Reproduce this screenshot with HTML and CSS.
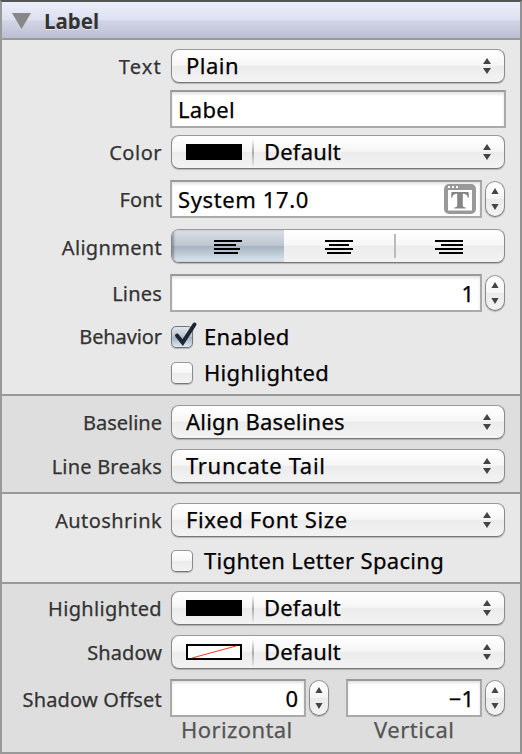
FILE: index.html
```
<!DOCTYPE html>
<html lang="en">
<head>
<meta charset="utf-8">
<title>Label</title>
<link rel="stylesheet" href="styles.css">
</head>
<body>
<svg class="defs" width="0" height="0">
  <symbol id="arrows" viewBox="0 0 8 16"><path d="M4 0 8 6H0zM0 10h8L4 16z"/></symbol>
  <symbol id="steps" viewBox="0 0 8 22"><path d="M4 0 7.6 6H.4zM.4 16h7.2L4 22z"/></symbol>
</svg>
<main class="inspector">
  <header class="header">
    <svg class="disclosure" width="19" height="16" viewBox="0 0 19 16"><path d="M0 0h19L9.500 16z"/></svg>
    <h1>Label</h1>
  </header>

  <section class="group first">
    <div class="row popup-row">
      <span class="label t14">Text</span>
      <div class="popup"><span class="t5">Plain</span><svg class="arrows"><use href="#arrows"/></svg></div>
    </div>
    <div class="row field-row">
      <span class="label"></span>
      <div class="field t3">Label</div>
    </div>
    <div class="row popup-row">
      <span class="label t5">Color</span>
      <div class="popup"><i class="swatch"></i><i class="rule"></i><span class="t2">Default</span><svg class="arrows"><use href="#arrows"/></svg></div>
    </div>
    <div class="row field-row font-row">
      <span class="label t1">Font</span>
      <div class="field t6"><span>System 17.0</span>
        <svg class="font-icon" width="32" height="30" viewBox="0 0 32 30">
          <rect width="32" height="30" rx="5" fill="#999"/>
          <path d="M4 6h24v20.500H4z" fill="#fff"/>
          <path d="M4 2h2v2H4zM8 2h2v2H8zM12 2h2v2h-2z" fill="#fff"/>
          <path d="M7.500 8h17l.5 5.500h-1.200c-.6-2.600-1.700-3.700-5-3.700v11.400c0 1.600.7 2 2.700 2.100V24.500h-11v-1.200c2-.1 2.700-.5 2.700-2.100V9.800c-3.300 0-4.400 1.100-5 3.700H7z" fill="#858585"/>
        </svg>
      </div>
      <div class="stepper"><svg><use href="#steps"/></svg></div>
    </div>
    <div class="row popup-row segment-row">
      <span class="label t3">Alignment</span>
      <div class="segments">
        <div class="segment selected"><svg width="28" height="14"><path d="M0 0h28v2H0zM0 4h22v2H0zM0 8h26v2H0zM0 12h24v2H0z"/></svg></div>
        <div class="segment"><svg width="28" height="14"><path d="M0 0h28v2H0zM4 4h20v2H4zM0 8h28v2H0zM2 12h24v2H2z"/></svg></div>
        <div class="segment"><svg width="28" height="14"><path d="M0 0h28v2H0zM6 4h22v2H6zM0 8h28v2H0zM4 12h24v2H4z"/></svg></div>
      </div>
    </div>
    <div class="row field-row lines-row">
      <span class="label t2">Lines</span>
      <div class="field number">1</div>
      <div class="stepper"><svg><use href="#steps"/></svg></div>
    </div>
    <div class="row check-row enabled-row">
      <span class="label tn2">Behavior</span>
      <div class="check on"><svg class="tick" width="24" height="24" viewBox="0 0 24 24"><path d="M4 13.500 9.700 20.500 21.500 2.500"/></svg></div>
      <span class="check-text t3">Enabled</span>
    </div>
    <div class="row check-row">
      <span class="label"></span>
      <div class="check"></div>
      <span class="check-text t3">Highlighted</span>
    </div>
  </section>

  <section class="group alt second">
    <div class="row popup-row">
      <span class="label">Baseline</span>
      <div class="popup"><span class="t2">Align Baselines</span><svg class="arrows"><use href="#arrows"/></svg></div>
    </div>
    <div class="row popup-row">
      <span class="label t2">Line Breaks</span>
      <div class="popup"><span class="t7">Truncate Tail</span><svg class="arrows"><use href="#arrows"/></svg></div>
    </div>
  </section>

  <section class="group third">
    <div class="row popup-row">
      <span class="label t4">Autoshrink</span>
      <div class="popup"><span class="t6">Fixed Font Size</span><svg class="arrows"><use href="#arrows"/></svg></div>
    </div>
    <div class="row check-row">
      <span class="label"></span>
      <div class="check"></div>
      <span class="check-text t3">Tighten Letter Spacing</span>
    </div>
  </section>

  <section class="group alt fourth">
    <div class="row popup-row">
      <span class="label t3">Highlighted</span>
      <div class="popup"><i class="swatch"></i><i class="rule"></i><span class="t2">Default</span><svg class="arrows"><use href="#arrows"/></svg></div>
    </div>
    <div class="row popup-row">
      <span class="label t1">Shadow</span>
      <div class="popup"><svg class="swatch none" width="56" height="16"><path d="M1 1h54v14H1z" fill="#fff" stroke="#000" stroke-width="2"/><path d="M6 14 50 2" stroke="#f2452f" stroke-width="1.200"/></svg><i class="rule"></i><span class="t2">Default</span><svg class="arrows"><use href="#arrows"/></svg></div>
    </div>
    <div class="row offset-row">
      <span class="label t2">Shadow Offset</span>
      <div class="field number">0</div>
      <div class="stepper"><svg><use href="#steps"/></svg></div>
      <div class="field number">−1</div>
      <div class="stepper"><svg><use href="#steps"/></svg></div>
      <span class="caption horizontal t4">Horizontal</span>
      <span class="caption vertical t5">Vertical</span>
    </div>
  </section>
</main>
</body>
</html>
```
FILE: styles.css
```
* { box-sizing: border-box; }
body { margin: 0; background: #e8e8e8; }
.defs { display: block; height: 0; }

.inspector {
  width: 522px;
  height: 754px;
  border: 2px solid #999;
  border-top-color: #555;
  border-right-color: #929292;
  font: 22px/30px "Noto Sans", "Open Sans", sans-serif;
  color: #000;
  -webkit-text-stroke: .25px currentColor;
  white-space: nowrap;
}

.header {
  display: flex;
  align-items: center;
  height: 38px;
  padding: 0 0 2px 10px;
  border-bottom: 2px solid #999;
  background: linear-gradient(#eceefa, #dde0f1 50%, #d3d5e6 52%, #bbbdd4);
}
.disclosure { margin-top: 4px; fill: #878787; }
h1 {
  margin: 3px 0 0 13px;
  font-size: 20.500px;
  font-weight: 700;
  -webkit-text-stroke: 0;
  color: #333;
  text-shadow: 0 1px 0 rgba(255, 255, 255, .5);
}

.group { background: #e8e8e8; border-bottom: 2px solid #999; }
.group.alt { background: #dedede; }
.first { height: 356px; padding-top: 9px; }
.second { height: 98px; padding-top: 9px; }
.third { height: 90px; padding-top: 9px; }
.fourth { height: 168px; padding-top: 7px; border: 0; }

.row { display: flex; align-items: center; }
.popup-row { height: 34px; }
.popup-row + .popup-row { margin-top: 10px; }
.field-row { height: 38px; margin-top: 7px; }
.field-row + .popup-row { margin-top: 7px; }
.first .font-row { margin-top: 11px; }
.first .segment-row { margin-top: 11px; }
.first .lines-row { margin-top: 11px; }
.check-row { height: 22px; margin-top: 14px; }
.check-row.enabled-row { margin-top: 14px; }
.third .check-row { margin-top: 13px; }

.label {
  width: 160px;
  margin-right: 9px;
  font-size: 20px;
  text-align: right;
  color: #333;
}
.popup-row .label { padding-top: 1px; }
.field-row .label { padding-top: 2px; }
.segment-row .label { padding-top: 3px; }

.popup, .segments, .stepper, .check {
  border: 1.500px solid #8a8a8a;
  border-top-color: #9a9a9a;
  border-bottom-color: #777;
  background: linear-gradient(#fff, #f6f6f6 48%, #ebebeb 50%, #f3f3f3);
  box-shadow: 0 1px 1px rgba(0, 0, 0, .22);
}
.popup {
  display: flex;
  align-items: center;
  width: 334px;
  height: 34px;
  padding: 0 14px;
  border-radius: 8px;
}
.popup span { padding-bottom: 2px; }
.arrows { width: 8px; height: 16px; margin-left: auto; margin-right: -1px; fill: #444; }
.swatch { width: 56px; height: 16px; background: #000; }
.swatch.none { background: none; }
.rule {
  width: 2px;
  height: 27px;
  margin: 0 10px 0 10px;
  background: linear-gradient(rgba(150, 150, 150, 0), #aaa 50%, rgba(150, 150, 150, .1));
}

.field {
  display: flex;
  align-items: center;
  flex: none;
  width: 336px;
  height: 38px;
  margin-left: -1px;
  padding: 0 6px;
  border: 2px solid #aaa;
  border-top-color: #999;
  background: #fff;
  box-shadow: inset 0 2px 3px rgba(0, 0, 0, .12);
}
.font-row .field, .lines-row .field { width: 312px; }
.font-row .field { padding-right: 4px; }
.font-icon { margin-left: auto; }
.number { justify-content: flex-end; }

.stepper {
  display: flex;
  align-items: center;
  justify-content: center;
  width: 20px;
  height: 36px;
  margin-left: 3px;
  border-radius: 10px;
}
.stepper svg { width: 8px; height: 22px; fill: #444; }

.segments {
  display: grid;
  grid-template-columns: 112px 110px 1fr;
  width: 334px;
  height: 34px;
  border-radius: 8px;
  overflow: hidden;
}
.segment { display: flex; align-items: center; justify-content: center; }
.segment svg { margin-top: 2px; }
.segment:last-child {
  background: linear-gradient(#bbb, #bbb) 0 4px / 2px 24px no-repeat;
}
.selected {
  background: linear-gradient(#dce1e7, #bcc5cf 49%, #a5b2c1 51%, #dce9f0);
  box-shadow: inset 2px 0 2px rgba(60, 70, 85, .4);
}

.check { width: 22px; height: 22px; flex: none; border-radius: 5px; }
.check.on {
  position: relative;
  border-color: #70757e;
  background: linear-gradient(#e2e6eb, #b7c1cd 50%, #a5b2c1 52%, #dde8ef);
}
.tick { position: absolute; left: 1px; top: -5px; fill: none; stroke: #1c2733; stroke-width: 4; overflow: visible; stroke-linecap: round; }
.check-text { margin-left: 11px; padding-bottom: 3px; }

.offset-row {
  display: grid;
  grid-template-columns: 160px 9px 136px 23px 17px 136px 23px;
  grid-template-rows: 38px 24px;
  margin-top: 10px;
}
.offset-row .label { grid-area: 1 / 1; padding-top: 3px; }
.offset-row .field { width: 136px; grid-row: 1; margin-left: -1px; }
.offset-row .field:nth-child(2) { grid-column: 3; }
.offset-row .field:nth-child(4) { grid-column: 6; }
.offset-row .stepper { grid-row: 1; }
.offset-row .stepper:nth-child(3) { grid-column: 4; margin-left: 2px; }
.offset-row .stepper:nth-child(5) { grid-column: 7; margin-left: 2px; }
.caption { grid-row: 2; color: #555; line-height: 24px; }
.horizontal { grid-column: 3 / 5; padding-left: 10px; }
.vertical { grid-column: 6 / 8; padding-left: 27px; }

.tn2 { letter-spacing: -.1px; }
.t1 { letter-spacing: .08px; }
.t2 { letter-spacing: .2px; }
.t3 { letter-spacing: .32px; }
.t4 { letter-spacing: .4px; }
.t5 { letter-spacing: .5px; }
.t6 { letter-spacing: .62px; }
.t7 { letter-spacing: .7px; }
.t14 { letter-spacing: 1.200px; }
```
